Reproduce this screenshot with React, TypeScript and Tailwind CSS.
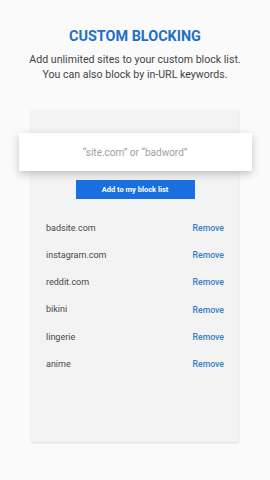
const items = ['badsite.com', 'instagram.com', 'reddit.com', 'bikini', 'lingerie', 'anime'];

export default function App() {
  return (
    <div
      className="w-[270px] h-[480px] bg-[#fafafa] flex flex-col items-center overflow-hidden"
      style={{ fontFamily: 'Roboto, "Liberation Sans", sans-serif' }}
    >
      <h1 className="mt-[29px] text-[14.4px] leading-[16px] font-bold text-[#1f6fc6]">
        CUSTOM BLOCKING
      </h1>
      <p className="mt-[7px] text-[10.6px] leading-[15px] text-[#444] text-center">
        Add unlimited sites to your custom block list.
        <br />
        You can also block by in-URL keywords.
      </p>

      <div className="mt-[28px] w-[208px] h-[332px] bg-[#f3f3f3] shadow-[0_1px_2px_rgba(0,0,0,0.12)] flex flex-col items-center">
        <div className="mt-[23px] w-[233px] h-[38px] bg-white shadow-[0_3px_8px_rgba(0,0,0,0.22)] flex items-center justify-center">
          <span className="text-[10px] text-[#a0a0a0]">“site.com” or “badword”</span>
        </div>
        <button
          type="button"
          className="mt-[9px] w-[119px] h-[19px] bg-[#1a6fe0] text-white text-[7.5px] font-bold flex items-center justify-center"
        >
          Add to my block list
        </button>

        <div className="mt-[16px] w-full flex flex-col">
          {items.map(item => (
            <div key={item} className="h-[27.2px] flex items-center justify-between pl-[15px] pr-[15px]">
              <span className="text-[9px] text-[#474747]">{item}</span>
              <span className="text-[8.7px] font-medium text-[#3a7cc4]">Remove</span>
            </div>
          ))}
        </div>
      </div>
    </div>
  );
}
